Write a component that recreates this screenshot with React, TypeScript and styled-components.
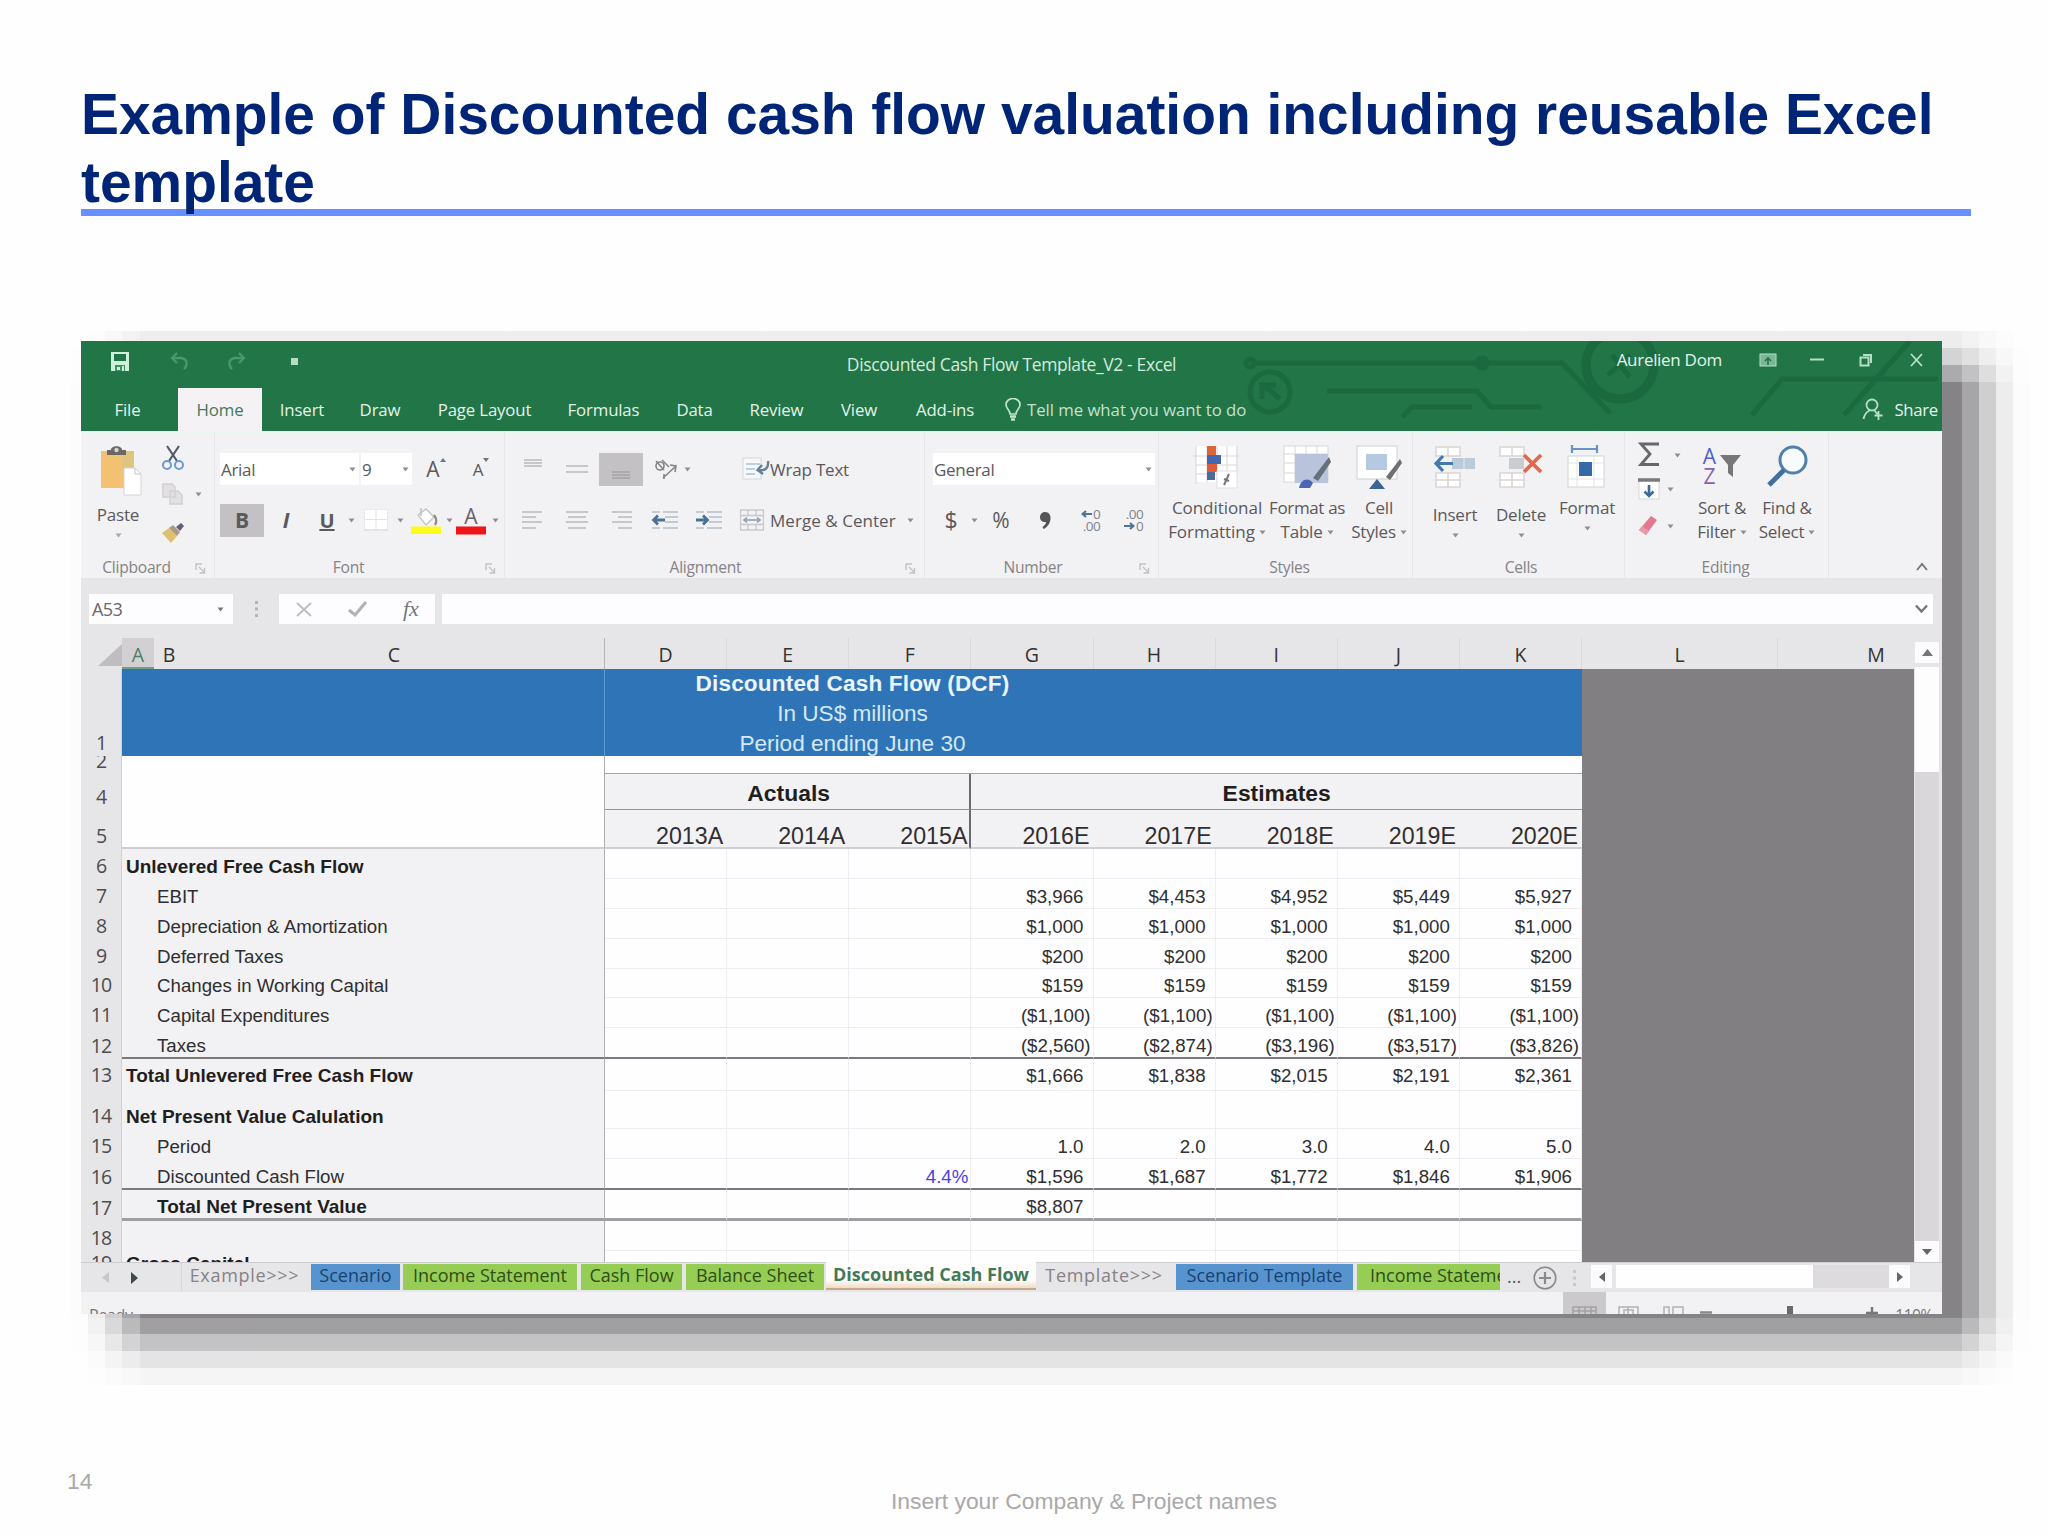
import React from 'react';
import styled, { createGlobalStyle, css } from 'styled-components';

const UI = '"Open Sans", "Noto Sans", sans-serif';
const ARIAL = '"Liberation Sans", Arial, sans-serif';
const GRID = '41px 483px repeat(8, 122.125px) 1fr';

const Global = createGlobalStyle`
  * { box-sizing: border-box; }
  html, body { margin: 0; padding: 0; background: #fff; }
  svg { display: block; flex: none; }
`;

/* ---------- slide ---------- */
const Slide = styled.div`
  width: 2048px; height: 1536px; background: #fefefe; overflow: hidden;
  padding: 79px 106px 0 81px; font-family: ${ARIAL};
  display: flex; flex-direction: column;
`;
const Heading = styled.h1`
  margin: 0; width: 1890px; height: 137px; padding-top: 1px;
  border-bottom: 7px solid #6690ff;
  font-size: 56.9px; line-height: 68.4px; font-weight: 700; color: #002577;
`;
const Stage = styled.div`
  position: relative; margin-top: 125px; width: 1861px; height: 973px;
`;
const Shadow = styled.div`
  position: absolute; left: -10px; top: -10px; width: 1959px; height: 1054px;
  background: linear-gradient(to bottom,
    rgba(12,8,14,.066) 0 17px, rgba(12,8,14,.17) 17px 34px, rgba(12,8,14,.34) 34px 51px,
    rgba(12,8,14,.5) 51px 987px, rgba(12,8,14,.39) 987px 1003px, rgba(12,8,14,.24) 1003px 1020px,
    rgba(12,8,14,.105) 1020px 1037px, rgba(12,8,14,.035) 1037px 1054px);
  mask-image: linear-gradient(to right,
    rgba(0,0,0,.01) 0 17px, rgba(0,0,0,.12) 17px 34px, rgba(0,0,0,.38) 34px 51px, rgba(0,0,0,.72) 51px 69px,
    #000 69px 1891px, rgba(0,0,0,.72) 1891px 1908px, rgba(0,0,0,.38) 1908px 1925px,
    rgba(0,0,0,.14) 1925px 1942px, rgba(0,0,0,.01) 1942px 1959px);
`;
const Window = styled.div`
  position: relative; width: 1861px; height: 973px; overflow: hidden;
  background: #e6e5e7; font-family: ${UI}; display: flex; flex-direction: column;
`;
const Footer = styled.footer`
  flex: 1; display: grid; grid-template-columns: 810px auto 1fr;
  color: #aaa8aa; font-size: 22.85px; line-height: 28px; padding-top: 153px;
`;
const PageNo = styled.span`margin-left: -14px;`;
const Company = styled.span`padding-top: 20px; white-space: nowrap;`;

/* ---------- title bar & tabs ---------- */
const Green = styled.header`
  position: relative; height: 90px; flex: none; background: #217547; color: #e4f3ea;
`;
const Circuit = styled.svg`position: absolute; right: 0; top: 0;`;
const TitleRow = styled.div`
  position: relative; height: 47px; display: grid; grid-template-columns: 1fr auto 1fr;
`;
const Quick = styled.div`display: flex; align-items: center; padding: 0 0 7px 29px;`;
const Gap = styled.span<{ $w: number }>`flex: none; width: ${p => p.$w}px;`;
const DocTitle = styled.div`
  font-size: 17.5px; line-height: 47px; white-space: pre; letter-spacing: -0.38px; color: #d3ebdc;
`;
const WinTools = styled.div`
  display: flex; align-items: center; justify-content: flex-end; padding: 0 19px 10px 0;
`;
const UserName = styled.span`font-size: 17px; letter-spacing: -0.3px; white-space: nowrap; margin-right: 37px;`;
const TabRow = styled.nav`position: relative; height: 43px; display: flex;`;
const Tab = styled.div<{ $w: number; $on?: boolean; $pull?: number }>`
  width: ${p => p.$w}px; padding-right: ${p => p.$pull ?? 0}px; text-align: center; line-height: 44px; font-size: 16.8px;
  letter-spacing: -0.15px; white-space: nowrap;
  ${p => p.$on && css`background: #f4f2f4; color: #46785c;`}
`;
const Tell = styled.div`
  display: flex; align-items: center; gap: 6px; padding-left: 13px; flex: 1;
  font-size: 16.8px; letter-spacing: -0.05px; color: #c4e2cf; white-space: nowrap;
`;
const Share = styled.div`
  display: flex; align-items: center; gap: 10px; padding-right: 4px; font-size: 16.8px; letter-spacing: -0.3px;
`;

/* ---------- ribbon ---------- */
const Ribbon = styled.div`
  height: 147px; flex: none; display: flex; background: #f2f1f3; color: #5a595c;
  border-top: 2px solid #eaf7ef;
`;
const Group = styled.section<{ $w: number }>`
  width: ${p => p.$w}px; flex: none; display: flex; flex-direction: column; border-right: 1px solid #e8e6e9;
`;
const GroupBody = styled.div`height: 123px; display: flex; padding-top: 12px;`;
const GroupFoot = styled.div<{ $pad?: number; $lead?: number }>`
  height: 22px; display: flex; align-items: center; justify-content: center; position: relative;
  font-size: 15.6px; color: #858386; padding-right: ${p => p.$pad ?? 0}px; padding-left: ${p => p.$lead ?? 0}px;
  letter-spacing: -0.25px;
`;
const Launcher = styled.svg`position: absolute; right: 7px; top: 6px;`;
const Rows = styled.div`display: flex; flex-direction: column; gap: 3px;`;
const Row = styled.div`height: 48px; display: flex; align-items: center;`;
const Slot = styled.div<{ $w: number; $ml?: number; $fs?: number; $b?: boolean; $on?: boolean; $i?: boolean }>`
  width: ${p => p.$w}px; margin-left: ${p => p.$ml ?? 0}px; height: 33px; flex: none;
  display: flex; align-items: center; justify-content: center; white-space: nowrap;
  font-size: ${p => p.$fs ?? 17}px; font-weight: ${p => (p.$b ? 700 : 400)};
  font-style: ${p => (p.$i ? 'italic' : 'normal')};
  background: ${p => (p.$on ? '#c3c1c4' : 'transparent')};
`;
const Combo = styled.div<{ $w: number; $ml?: number }>`
  width: ${p => p.$w}px; margin-left: ${p => p.$ml ?? 0}px; height: 32px; background: #fff; flex: none;
  display: flex; align-items: center; justify-content: space-between; padding: 0 3px 0 1px;
  font-size: 17px; letter-spacing: -0.3px;
`;
const RowLabel = styled.span<{ $w: number; $ls?: number }>`
  width: ${p => p.$w}px; font-size: 17px; letter-spacing: ${p => p.$ls ?? -0.2}px; white-space: nowrap;
`;
const Tall = styled.div<{ $w: number; $ml?: number }>`
  width: ${p => p.$w}px; margin-left: ${p => p.$ml ?? 0}px; flex: none;
  display: flex; flex-direction: column; align-items: center;
`;
const TallIcon = styled.div<{ $h: number }>`height: ${p => p.$h}px; flex: none; display: flex; align-items: flex-start;`;
const TallText = styled.div<{ $ls?: number }>`
  height: 24px; line-height: 24px; font-size: 17px; white-space: nowrap; letter-spacing: ${p => p.$ls ?? -0.2}px;
  display: flex; align-items: center; gap: 4px;
`;
const Drop = styled.div`padding-top: 6px;`;
const Stack = styled.div<{ $w: number; $ml?: number }>`
  width: ${p => p.$w}px; margin-left: ${p => p.$ml ?? 0}px; display: flex; flex-direction: column;
`;
const StackRow = styled.div<{ $h: number; $gap?: number }>`
  height: ${p => p.$h}px; display: flex; align-items: center; gap: ${p => p.$gap ?? 12}px;
`;
const Collapse = styled.div`flex: 1; display: flex; align-items: flex-end; justify-content: flex-end; padding: 0 14px 7px 0;`;

/* ---------- formula bar ---------- */
const FormulaBar = styled.div`height: 60px; flex: none; display: flex; padding: 16px 9px 0 8px;`;
const White = styled.div<{ $w?: number; $ml?: number }>`
  height: 30px; background: #fdfcfe; ${p => (p.$w ? `width: ${p.$w}px` : 'flex: 1')};
  margin-left: ${p => p.$ml ?? 0}px; display: flex; align-items: center; justify-content: space-between;
  padding: 0 5px 0 3px; font-size: 18px; letter-spacing: -0.6px; color: #6a686b;
`;
const NameArrow = styled.span`padding-right: 4px;`;
const Dots = styled.div`width: 46px; height: 30px; display: flex; align-items: center; justify-content: center;`;
const Buttons = styled.div`
  width: 156px; height: 30px; background: #fdfcfe; display: flex; align-items: center; padding-left: 17px; color: #77757a;
`;
const Fx = styled.span`font-family: "Liberation Serif", serif; font-style: italic; font-size: 22px; line-height: 28px; margin-left: 36px;`;

/* ---------- sheet ---------- */
const SheetArea = styled.div`height: 624px; flex: none; display: flex; overflow: hidden;`;
const Sheet = styled.div`width: 1833px; height: 624px; overflow: hidden; flex: none;`;
const HeadRow = styled.div`
  height: 31px; display: grid; grid-template-columns: ${GRID}; grid-auto-rows: 100%; background: #e6e5e7; color: #333234;
  font-size: 19.5px; line-height: 34px; text-align: center;
`;
const HeadCell = styled.div`border-right: 1px solid #dbd9dc;`;
const HeadABC = styled.div`display: grid; grid-template-columns: 32px 30px 1fr; border-right: 1px solid #b5b3b6;`;
const HeadA = styled.div`background: #d2d0d3; color: #4d7f5f; border-bottom: 2px solid #6fa283; height: 31px;`;
const HeadLM = styled.div`display: grid; grid-template-columns: 196px 1fr;`;
const HeadL = styled.div`border-right: 1px solid #d9d7da;`;
const HeadM = styled.div`padding-left: 60px;`;
const Corner = styled.div`display: flex; justify-content: flex-end; align-items: flex-end; padding: 0 0 3px;`;
const Line = styled.div<{ $h: number }>`
  height: ${p => p.$h}px; display: grid; grid-template-columns: ${GRID}; grid-auto-rows: 100%;
`;
const Num = styled.div<{ $lift?: number }>`
  display: flex; align-items: flex-end; justify-content: center; background: #e6e5e7; color: #4e4c4f;
  border-right: 1px solid #d2d0d3; font-size: 19.5px; line-height: 22px; letter-spacing: -0.9px; overflow: hidden;
  padding-bottom: ${p => 2 + (p.$lift ?? 0)}px;
`;
const Label = styled.div<{ $b?: boolean; $ind?: boolean; $bot?: string; $white?: boolean; $lift?: number }>`
  display: flex; align-items: flex-end; background: ${p => (p.$white ? '#fefefe' : '#f2f1f3')};
  padding: 0 0 ${p => 2 + (p.$lift ?? 0)}px ${p => (p.$ind ? 35 : 4)}px; border-right: 1px solid #b0aeb1;
  border-bottom: ${p => p.$bot ?? '0 solid'}; font-family: ${ARIAL}; font-size: ${p => (p.$b ? 19 : 18.7)}px; line-height: 21px;
  font-weight: ${p => (p.$b ? 700 : 400)}; color: ${p => (p.$b ? '#1f1e20' : '#2f2e30')}; white-space: nowrap;
`;
const Cell = styled.div<{ $bot?: string; $blue?: boolean; $pad: number; $lift?: number }>`
  display: flex; align-items: flex-end; justify-content: flex-end; background: #fefdff;
  padding: 0 ${p => p.$pad}px ${p => (p.$bot ? 2 : 1) + (p.$lift ?? 0)}px 0; border-right: 1px solid #eeedef;
  border-bottom: ${p => p.$bot ?? '1px solid #eeedef'}; font-family: ${ARIAL}; font-size: 18.7px; line-height: 21px;
  color: ${p => (p.$blue ? '#4a3fe0' : '#2f2e30')}; white-space: nowrap;
`;
const Void = styled.div`background: #817f82;`;
const Banner = styled.div`
  grid-column: 3 / 11; background: #2f74b6; padding-right: 482px; text-align: center;
  font-family: ${ARIAL}; font-size: 22.6px; line-height: 29.8px; color: #d4e8f8; overflow: hidden;
`;
const BannerTitle = styled.div`font-weight: 700; color: #eaf5ff; letter-spacing: 0.15px;`;
const BannerLeft = styled.div`background: #2f74b6; border-right: 1px solid #5b9bd0;`;
const Blank = styled.div`grid-column: 3 / 11; background: #fefefe; border-bottom: 1px solid #a3a69c;`;
const Span = styled.div<{ $c: string; $line?: boolean }>`
  grid-column: ${p => p.$c}; background: #f2f1f3; border-bottom: 1px solid #969497;
  ${p => p.$line && css`border-right: 2px solid #6b696c; padding-left: 3px;`}
  text-align: center; font-family: ${ARIAL}; font-weight: 700; font-size: 22.9px; line-height: 38px; color: #1f1e20;
`;
const Year = styled.div<{ $line?: boolean }>`
  background: #f2f1f3; border-bottom: 2px solid #d0ced1; padding: 0 4px 0 0;
  ${p => p.$line && css`border-right: 2px solid #6b696c; padding-right: 2px;`}
  display: flex; justify-content: flex-end; align-items: flex-end;
  font-family: ${ARIAL}; font-size: 23.2px; line-height: 22px; color: #2f2e30;
`;
const VScroll = styled.div`
  width: 28px; display: flex; flex-direction: column; background: #e6e5e7; padding: 4px 3px 0 1px;
`;
const VBtn = styled.div`height: 21px; background: #fbfafc; display: flex; align-items: center; justify-content: center; flex: none;`;
const VThumb = styled.div`height: 105px; margin-top: 4px; background: #fdfdfe; flex: none;`;
const VTrack = styled.div`flex: 1; background: #d9d7da;`;

/* ---------- sheet tabs & status ---------- */
const TabBar = styled.div`
  height: 30px; flex: none; display: flex; background: #e6e5e7; border-top: 1px solid #cfcdd0; align-items: stretch;
`;
const tones: Record<string, string> = { blue: '#5794cf', green: '#95cd55', plain: 'transparent', on: '#fefdfb' };
const inks: Record<string, string> = { blue: '#1b426b', green: '#304d18', plain: '#858386', on: '#3f7a5a' };
const SheetTab = styled.div<{ $w: number; $ml?: number; $tone: string; $left?: boolean; $ls?: number }>`
  width: ${p => p.$w}px; margin: 1px 0 2px ${p => p.$ml ?? 0}px; flex: none; background: ${p => tones[p.$tone]};
  color: ${p => inks[p.$tone]}; font-size: 18px; line-height: 22px; white-space: nowrap; overflow: hidden;
  text-align: ${p => (p.$left ? 'left' : 'center')}; padding-left: ${p => (p.$left ? 13 : 0)}px;
  letter-spacing: ${p => p.$ls ?? 0}px;
  ${p => p.$tone === 'on' && css`font-weight: 700; border-bottom: 2px solid #c9a78b;
    background: linear-gradient(#fefdfb 70%, #f0dcc4); margin-top: -1px; line-height: 25px;`}
`;
const TabNav = styled.div`width: 101px; display: flex; align-items: center; gap: 22px; padding-left: 21px; border-right: 1px solid #d8d6d9;`;
const More = styled.span`width: 33px; padding-left: 7px; font-size: 18px; line-height: 27px; color: #555;`;
const HScroll = styled.div`
  margin-left: 15px; width: 319px; display: flex; padding: 2px 0 4px; background: #e6e5e7;
`;
const HBtn = styled.div`width: 21px; background: #fbfafc; display: flex; align-items: center; justify-content: center; flex: none;`;
const HThumb = styled.div`width: 197px; margin-left: 4px; background: #fefefe;`;
const HTrack = styled.div`flex: 1; background: #dddbde;`;
const Center = styled.div`display: flex; align-items: center;`;
const Status = styled.div`
  height: 22px; flex: none; display: flex; background: #f2f1f3; color: #77757a; font-size: 16px; overflow: hidden;
`;
const Ready = styled.span`padding: 12px 0 0 8px; line-height: 22px; flex: 1; letter-spacing: -0.4px;`;
const ViewBtn = styled.div<{ $on?: boolean; $w: number }>`
  width: ${p => p.$w}px; height: 22px; background: ${p => (p.$on ? '#cbc9cc' : 'transparent')};
  display: flex; justify-content: center; padding-top: 14px;
`;
const Zoom = styled.span`padding: 12px 9px 0 0; line-height: 22px; font-size: 15.5px; letter-spacing: -0.4px;`;

/* ---------- icons ---------- */
const Arrow = ({ c = '#908e91' }: { c?: string }) => (
  <svg width="7" height="5" viewBox="0 0 7 5"><path d="M.5 .5h6L3.5 4.5z" fill={c} /></svg>
);
const Launch = () => (
  <Launcher width="13" height="13" viewBox="0 0 13 13" fill="none" stroke="#c3c1c4" strokeWidth="1.4">
    <path d="M2 8V2h6M5 5l5 5M10.500 6v5h-5" />
  </Launcher>
);
const Save = () => (
  <svg width="20" height="21" viewBox="0 0 20 21"><path d="M1 1h18v19H1z" fill="#cdf0da" /><path d="M4 3h12v7H4z" fill="#217547" /><path d="M5 14h10v6H5z" fill="#3f8f62" /><path d="M7 16h3v3H7zM12 15h2v5h-2z" fill="#cdf0da" /></svg>
);
const Undo = ({ flip }: { flip?: boolean }) => (
  <svg width="19" height="18" viewBox="0 0 19 18" fill="none" stroke="#4a976d" strokeWidth="2.400">
    <g transform={flip ? 'translate(19 0) scale(-1 1)' : undefined}><path d="M2 6h8c8 0 8 7 4 11M7 1L2 6l5 5" /></g>
  </svg>
);
const Bulb = () => (
  <svg width="16" height="23" viewBox="0 0 16 23" fill="none" stroke="#bfe5cd" strokeWidth="1.700">
    <path d="M5 16c0-4-4-5-4-9.500a7 6 0 0 1 14 0C15 11 11 12 11 16z" /><path d="M5 18.500h6M6 21.500h4" strokeWidth="2.500" />
  </svg>
);
const Person = () => (
  <svg width="22" height="23" viewBox="0 0 22 23" fill="none" stroke="#b9dfc7" strokeWidth="1.800">
    <circle cx="10" cy="7" r="5.500" /><path d="M1.500 21c1-5 4-7.500 6-8.500M12.500 12.500l4 5M16.500 13v9M12.500 17.500h8" />
  </svg>
);
const PasteIcon = () => (
  <svg width="42" height="54" viewBox="0 0 42 54">
    <rect x="1" y="6" width="33" height="37" fill="#f4c173" /><rect x="22" y="6" width="12" height="20" fill="#dfc47f" />
    <path d="M7 10V5h4c0-5 11-5 11 0h4v5z" fill="#6b6667" /><circle cx="16.500" cy="5" r="2.200" fill="#d9d3c8" />
    <path d="M24 23h11l6 6v21H24z" fill="#fff" stroke="#d4d2d8" /><path d="M35 23v6h6" fill="none" stroke="#c5c3cf" />
  </svg>
);
const Cut = () => (
  <svg width="24" height="26" viewBox="0 0 24 26" fill="none">
    <path d="M6 1l10 15M18 1L8 16" stroke="#555b66" strokeWidth="2.200" />
    <circle cx="6" cy="20" r="4" stroke="#6d9bcf" strokeWidth="2" /><circle cx="18" cy="20" r="4" stroke="#6d9bcf" strokeWidth="2" />
  </svg>
);
const Copy = () => (
  <svg width="24" height="24" viewBox="0 0 24 24" fill="#e2e0e3" stroke="#d2d0d3" strokeWidth="1.500"><path d="M2 2h9l3 3v10H2zM9 9h8l4 4v9H9z" /></svg>
);
const Brush = () => (
  <svg width="24" height="22" viewBox="0 0 24 22"><path d="M1 11l7-5 8 8-6 7z" fill="#dfc06e" /><path d="M8 6l4-3 7 7-3 4z" fill="#a89a86" /><path d="M15 5l5-4 3 3-4 5z" fill="#665c78" /></svg>
);
const Border = () => (
  <svg width="24" height="22" viewBox="0 0 24 22"><rect x=".5" y=".5" width="23" height="20" fill="#fff" stroke="#ebe9ec" /><path d="M12 1v20M1 10.500h22" stroke="#e4e2e5" /><path d="M0 21h24" stroke="#dad8db" /></svg>
);
const Bucket = () => (
  <svg width="32" height="30" viewBox="0 0 32 30"><path d="M8 10l8-6 8 8-8 8z" fill="#fdfdfd" stroke="#c8c6c4" strokeWidth="1.500" /><path d="M11 3v8" stroke="#c0bebc" strokeWidth="1.500" /><path d="M24 10c3 4 3 7 1 10" stroke="#8e8c85" strokeWidth="2.200" fill="none" /><rect x="1" y="21.500" width="30" height="7.500" fill="#fbfb1c" /></svg>
);
const FontColorBar = () => (
  <svg width="30" height="9" viewBox="0 0 30 9"><rect width="30" height="8" y=".5" fill="#f01318" /></svg>
);
const FontColor = styled.div<{ $w: number }>`
  width: ${p => p.$w}px; height: 28px; display: flex; flex-direction: column; align-items: center;
  font-size: 21px; line-height: 20px; color: #66646a; flex: none;
`;
const Grow = ({ d }: { d: string }) => (
  <svg width="6" height="24" viewBox="0 0 6 24"><path d={d} fill="#6b7685" /></svg>
);
const Bars = ({ w, ys, x = [0, 0, 0, 0], c = '#c3c1c4' }: { w: number[]; ys: number[]; x?: number[]; c?: string }) => (
  <svg width="22" height="22" viewBox="0 0 22 22" stroke={c} strokeWidth="1.800">
    {ys.map((y, i) => <path key={y} d={`M${x[i]} ${y}h${w[i]}`} />)}
  </svg>
);
const Angle = () => (
  <svg width="26" height="24" viewBox="0 0 26 24" fill="none" stroke="#858386" strokeWidth="1.600"><circle cx="7" cy="9" r="4" /><path d="M3 4l8 9M9 3l7 7M10 21L23 9M17 8l6 1-1 6M11 22l0-5" /></svg>
);
const Indent = ({ right }: { right?: boolean }) => (
  <svg width="28" height="22" viewBox="0 0 28 22" fill="none"><path d="M12 3h15M14 8h13M14 13h13M12 19h15M1 3h8M1 19h8" stroke="#c3ccd4" strokeWidth="1.800" />
    <path d={right ? 'M1 11h11M8 6.500l4.500 4.500L8 15.500' : 'M14 11H3M7 6.500L2.500 11 7 15.500'} stroke="#4a7296" strokeWidth="2.800" /></svg>
);
const Wrap = () => (
  <svg width="28" height="24" viewBox="0 0 28 24" fill="none"><rect x="1" y="1" width="18" height="21" fill="#f7f8fa" stroke="#d3d8de" /><path d="M4 7h14M4 12h9M4 17h9" stroke="#a5c2dc" strokeWidth="1.600" /><path d="M26 4c1 7-3 10-9 9M20 8l-4.500 5 5.500 4" stroke="#64809a" strokeWidth="2.400" /></svg>
);
const Merge = () => (
  <svg width="24" height="22" viewBox="0 0 24 22" fill="none" stroke="#c6c9cd"><path d="M.5 1h23v20H.5zM.5 6.500h23M.5 15.500h23M8 1v5M16 1v5M8 16v5M16 16v5" strokeWidth="1.400" /><path d="M4 11h16M7 8.500L4 11l3 2.500M17 8.500l3 2.500-3 2.500" stroke="#8b9eb3" strokeWidth="1.600" /></svg>
);
const DecBox = styled.div<{ $ml: number }>`
  width: 23px; margin-left: ${p => p.$ml}px; flex: none; display: flex; flex-direction: column;
  font-size: 13.5px; line-height: 12px; color: #7c858e; letter-spacing: -0.6px;
`;
const DecRow = styled.div`display: flex; align-items: center; justify-content: flex-end; gap: 1px; height: 12px;`;
const DecArrow = ({ right }: { right?: boolean }) => (
  <svg width="11" height="8" viewBox="0 0 11 8" fill="none" stroke="#4d7396" strokeWidth="2"><path d={right ? 'M0 4h9M6 1l3.500 3L6 7' : 'M11 4H2M5 1L1.500 4 5 7'} /></svg>
);
const Cond = () => (
  <svg width="48" height="46" viewBox="0 0 48 46"><rect x="3" y="1" width="40" height="36" fill="#fff" /><path d="M3 1v38M14 1v36M24 1v36M34 1v30M44 1v30M0 11h46M3 20h41M3 29h30" stroke="#dad6d8" /><rect x="14" y="1" width="9" height="9" fill="#d9673b" /><rect x="14" y="10" width="14" height="9" fill="#4467ad" /><rect x="14" y="19" width="10" height="8" fill="#dd5e36" /><rect x="14" y="27" width="8" height="8" fill="#51699b" /><rect x="24" y="26" width="20" height="17" fill="#fff" stroke="#e0dfe2" /><path d="M36 29l-5 11M31 34l5 2" stroke="#77757a" strokeWidth="2" /></svg>
);
const FmtTable = () => (
  <svg width="48" height="46" viewBox="0 0 48 46"><rect x="1" y="1" width="44" height="36" fill="#fff" stroke="#d8d8da" /><path d="M1 9h44M12 1v36M23 1v8M34 1v8M1 18h11M1 28h11" stroke="#d5d9d6" /><rect x="12" y="9" width="33" height="29" fill="#b9c4dc" /><path d="M46 12L30 33l5 3 13-19z" fill="#65707a" /><path d="M16 43c2-9 9-11 14-5l-3 5z" fill="#4c63b6" /></svg>
);
const CellStyles = () => (
  <svg width="46" height="46" viewBox="0 0 46 46"><rect x="1" y="1" width="40" height="33" fill="#fff" stroke="#c9d3cf" /><rect x="10" y="9" width="21" height="16" fill="#b6c9e2" /><path d="M44 14L30 32l4 3 12-17z" fill="#6e6f70" /><path d="M13 44l8-10 8 10z" fill="#3c6598" /></svg>
);
const InsertIcon = () => (
  <svg width="44" height="46" viewBox="0 0 44 46"><path d="M3 2h24v9H3zM15 2v9M3 28h24v14H3zM15 28v14M3 35h24" fill="#fff" stroke="#d9d5d3" strokeWidth="1.500" /><rect x="19" y="13" width="23" height="11" fill="#bccbdc" /><path d="M31 13v11" stroke="#e3e9f0" /><path d="M20 18.500H3M10 11l-7 7.500 7 7.500" fill="none" stroke="#4179b0" strokeWidth="3.200" /></svg>
);
const DeleteIcon = () => (
  <svg width="44" height="46" viewBox="0 0 44 46"><path d="M1 2h24v9H1zM13 2v9M1 28h24v14H1zM13 28v14M1 35h24" fill="#fff" stroke="#d9d5d3" strokeWidth="1.500" /><rect x="10" y="13" width="15" height="11" fill="#c9cdd3" /><path d="M25 10l17 17M42 10L25 27" stroke="#e2694d" strokeWidth="3.800" /></svg>
);
const FormatIcon = () => (
  <svg width="42" height="48" viewBox="0 0 42 48"><path d="M6 4h25M6 0v8M31 0v8" stroke="#6b94c4" strokeWidth="2.200" fill="none" /><rect x="2" y="11" width="36" height="31" fill="#fff" stroke="#ccd6d0" /><path d="M2 18h38M2 34h38M11 11v31M28 11v31" stroke="#e1e3e4" /><rect x="13" y="17" width="13" height="14" fill="#356aa6" /></svg>
);
const FillIcon = () => (
  <svg width="23" height="22" viewBox="0 0 23 22"><rect x="1" y="1" width="20" height="20" fill="#fff" stroke="#d8d6d9" /><path d="M0 2h22" stroke="#7a787b" strokeWidth="3.500" /><path d="M11 7v11M6.500 13.500L11 18l4.500-4.500" stroke="#3d6a98" strokeWidth="2.600" fill="none" /></svg>
);
const Eraser = () => (
  <svg width="22" height="20" viewBox="0 0 22 20"><path d="M1 14L13 0l6 4L8 19z" fill="#e0798f" /><path d="M1 14l3-4 7 5-3 4z" fill="#e89aaa" /></svg>
);
const Sigma = () => (
  <svg width="24" height="26" viewBox="0 0 24 26" fill="none" stroke="#68666a" strokeWidth="2.800"><path d="M21 2H3l9 10L3 22.500h18" /></svg>
);
const SortWrap = styled.div`display: flex; align-items: center; gap: 4px; padding-top: 1px;`;
const SortAZ = styled.div`font-size: 21px; line-height: 20px; color: #4d62c4; text-align: center;`;
const SortZ = styled.div`color: #8d62ad;`;
const Funnel = () => <svg width="21" height="24" viewBox="0 0 21 24"><path d="M0 1h21l-8 10v12l-5-4v-8z" fill="#777578" /></svg>;
const Find = () => (
  <svg width="41" height="44" viewBox="0 0 41 44" fill="none"><circle cx="26" cy="15" r="13" fill="#f7fbfe" stroke="#4f80ad" strokeWidth="3" /><path d="M17 25L2 40" stroke="#426f9b" strokeWidth="5" /></svg>
);

/* ---------- data ---------- */
type R = { n: string; h: number; t?: string; b?: boolean; ind?: boolean; bot?: string; v?: string[]; lift?: number };
const rows: R[] = [
  { n: '6', h: 30, t: 'Unlevered Free Cash Flow', b: true },
  { n: '7', h: 30, t: 'EBIT', ind: true, v: ['', '', '', '$3,966', '$4,453', '$4,952', '$5,449', '$5,927'] },
  { n: '8', h: 30, t: 'Depreciation & Amortization', ind: true, v: ['', '', '', '$1,000', '$1,000', '$1,000', '$1,000', '$1,000'] },
  { n: '9', h: 30, t: 'Deferred Taxes', ind: true, v: ['', '', '', '$200', '$200', '$200', '$200', '$200'] },
  { n: '10', h: 29, t: 'Changes in Working Capital', ind: true, v: ['', '', '', '$159', '$159', '$159', '$159', '$159'] },
  { n: '11', h: 30, t: 'Capital Expenditures', ind: true, v: ['', '', '', '($1,100)', '($1,100)', '($1,100)', '($1,100)', '($1,100)'] },
  { n: '12', h: 31, t: 'Taxes', ind: true, bot: '2px solid #7b797c', v: ['', '', '', '($2,560)', '($2,874)', '($3,196)', '($3,517)', '($3,826)'] },
  { n: '13', h: 32, t: 'Total Unlevered Free Cash Flow', b: true, lift: 3, v: ['', '', '', '$1,666', '$1,838', '$2,015', '$2,191', '$2,361'] },
  { n: '14', h: 38, t: 'Net Present Value Calulation', b: true },
  { n: '15', h: 30, t: 'Period', ind: true, v: ['', '', '', '1.0', '2.0', '3.0', '4.0', '5.0'] },
  { n: '16', h: 31, t: 'Discounted Cash Flow', ind: true, bot: '2px solid #7b797c', v: ['', '', '4.4%', '$1,596', '$1,687', '$1,772', '$1,846', '$1,906'] },
  { n: '17', h: 31, t: 'Total Net Present Value', b: true, ind: true, bot: '3px solid #a09ea1', v: ['', '', '', '$8,807', '', '', '', ''] },
  { n: '18', h: 30 },
  { n: '19', h: 30, t: 'Gross Capital', b: true, lift: 5 },
];
const empty = ['', '', '', '', '', '', '', ''];
const years = ['2013A', '2014A', '2015A', '2016E', '2017E', '2018E', '2019E', '2020E'];
const tabs: [string, number][] = [['Insert', 80], ['Draw', 76], ['Page Layout', 133], ['Formulas', 105], ['Data', 77], ['Review', 87], ['View', 78], ['Add-ins', 94]];

export default function App() {
  return (
    <>
      <Global />
      <Slide>
        <Heading>Example of Discounted cash flow valuation including reusable Excel template</Heading>
        <Stage>
          <Shadow />
          <Window>
            <Green>
              <Circuit width="720" height="90" viewBox="0 0 720 90" fill="none" stroke="#1b693e" strokeWidth="5">
                <path d="M30 22h288l22 0 48 50M105 50h150l14 16h50M180 76l10-10h60" />
                <circle cx="48" cy="51" r="20" /><path d="M40 58V44h14M44 46l14 12" />
                <circle cx="398" cy="24" r="34" strokeWidth="9" /><path d="M386 34l22-20M390 14l18 22" />
                <circle cx="260" cy="22" r="5" /><circle cx="28" cy="22" r="4" />
                <path d="M530 74l30-36h156M622 74L688 0" />
              </Circuit>
              <TitleRow>
                <Quick><Save /><Gap $w={40} /><Undo /><Gap $w={38} /><Undo flip /><Gap $w={45} />
                  <svg width="7" height="7" viewBox="0 0 7 7"><path d="M0 0h7v7H0z" fill="#b5dfc5" /></svg>
                </Quick>
                <DocTitle>{'Discounted Cash Flow Template_V2 - Excel'}</DocTitle>
                <WinTools>
                  <UserName>Aurelien Dom</UserName>
                  <svg width="19" height="14" viewBox="0 0 19 14"><rect x="1" y="1" width="16" height="12" fill="#7ab796" stroke="#b5dfc5" /><path d="M9 12V5M6 8l3-3 3 3" stroke="#217547" strokeWidth="1.600" fill="none" /></svg>
                  <Gap $w={32} />
                  <svg width="14" height="3" viewBox="0 0 14 3"><path d="M0 1.500h14" stroke="#b5dfc5" strokeWidth="2" /></svg>
                  <Gap $w={35} />
                  <svg width="14" height="14" viewBox="0 0 14 14" fill="none" stroke="#b5dfc5" strokeWidth="2"><path d="M1.500 4.500h8v8h-8zM4 2h8v8" /></svg>
                  <Gap $w={37} />
                  <svg width="13" height="14" viewBox="0 0 13 14" fill="none" stroke="#c0e4ce" strokeWidth="1.700"><path d="M1 1l11 12M12 1L1 13" /></svg>
                </WinTools>
              </TitleRow>
              <TabRow>
                <Tab $w={97} $pull={4}>File</Tab>
                <Tab $w={84} $on>Home</Tab>
                {tabs.map(([t, w]) => <Tab key={t} $w={w}>{t}</Tab>)}
                <Tell><Bulb /><span>Tell me what you want to do</span></Tell>
                <Share><Person /><span>Share</span></Share>
              </TabRow>
            </Green>

            <Ribbon>
              <Group $w={134}>
                <GroupBody>
                  <Tall $w={56} $ml={9}>
                    <TallIcon $h={58}><Gap $w={6} /><PasteIcon /></TallIcon>
                    <TallText>Paste</TallText><Drop><Arrow c="#aaa8ab" /></Drop>
                  </Tall>
                  <Stack $w={60} $ml={15}>
                    <StackRow $h={26}><Cut /></StackRow>
                    <StackRow $h={46} $gap={10}><Copy /><Arrow /></StackRow>
                    <StackRow $h={32}><Brush /></StackRow>
                  </Stack>
                </GroupBody>
                <GroupFoot $pad={22}>Clipboard<Launch /></GroupFoot>
              </Group>
              <Group $w={290}>
                <GroupBody>
                  <Rows>
                    <Row>
                      <Combo $w={139} $ml={5}>Arial<Arrow /></Combo>
                      <Combo $w={51} $ml={2}>9<Arrow /></Combo>
                      <Slot $w={46} $fs={21} $ml={1}>A<Grow d="M0 5h6L3 1z" /></Slot>
                      <Slot $w={44} $fs={17}>A<Grow d="M0 1h6L3 5z" /></Slot>
                    </Row>
                    <Row>
                      <Slot $w={44} $ml={5} $fs={21} $b $on>B</Slot>
                      <Slot $w={44} $fs={21} $b $i>I</Slot>
                      <Slot $w={38} $fs={20} $b><u>U</u></Slot><Slot $w={10}><Arrow /></Slot>
                      <Slot $w={39}><Border /></Slot><Slot $w={10}><Arrow /></Slot>
                      <Slot $w={42}><Bucket /></Slot><Slot $w={4}><Arrow /></Slot>
                      <FontColor $w={40}>A<FontColorBar /></FontColor><Slot $w={8}><Arrow /></Slot>
                    </Row>
                  </Rows>
                </GroupBody>
                <GroupFoot $pad={22}>Font<Launch /></GroupFoot>
              </Group>
              <Group $w={420}>
                <GroupBody>
                  <Rows>
                    <Row>
                      <Slot $w={44} $ml={6}><Bars w={[18, 18, 18]} ys={[2, 5, 8]} x={[2, 2, 2]} /></Slot>
                      <Slot $w={44}><Bars w={[22, 22]} ys={[8, 14]} /></Slot>
                      <Slot $w={44} $on><Bars w={[18, 18, 18]} ys={[14, 17, 20]} x={[2, 2, 2]} c="#a9a7aa" /></Slot>
                      <Slot $w={38} $ml={4}><Angle /></Slot><Slot $w={4}><Arrow /></Slot>
                      <Slot $w={28} $ml={53}><Wrap /></Slot>
                      <RowLabel $w={90}>Wrap Text</RowLabel>
                    </Row>
                    <Row>
                      <Slot $w={44} $ml={6}><Bars w={[20, 14, 20, 14]} ys={[3, 8, 13, 19]} /></Slot>
                      <Slot $w={44}><Bars w={[22, 18, 22, 18]} ys={[3, 8, 13, 19]} x={[0, 2, 0, 2]} /></Slot>
                      <Slot $w={44}><Bars w={[20, 14, 20, 14]} ys={[3, 8, 13, 19]} x={[2, 8, 2, 8]} /></Slot>
                      <Slot $w={44}><Indent /></Slot><Slot $w={44}><Indent right /></Slot>
                      <Slot $w={24} $ml={9}><Merge /></Slot>
                      <Gap $w={6} /><RowLabel $w={137} $ls={0.05}>Merge &amp; Center</RowLabel><Arrow />
                    </Row>
                  </Rows>
                </GroupBody>
                <GroupFoot $pad={18}>Alignment<Launch /></GroupFoot>
              </Group>
              <Group $w={234}>
                <GroupBody>
                  <Rows>
                    <Row><Combo $w={222} $ml={8}>General<Arrow /></Combo></Row>
                    <Row>
                      <Slot $w={34} $ml={9} $fs={23}>$</Slot><Slot $w={12}><Arrow /></Slot>
                      <Slot $w={42} $fs={21}>%</Slot>
                      <Slot $w={46}><svg width="11" height="17" viewBox="0 0 11 17"><path d="M5 0c4 0 5.500 3 5.500 6 0 5-3 9-7 11l-1-2c2-1.500 3.500-3 3.500-5C2 10.500 0 8 0 5.300 0 2.500 2 0 5 0z" fill="#555356" /></svg></Slot>
                      <DecBox $ml={9}><DecRow><DecArrow />0</DecRow><DecRow>.00</DecRow></DecBox>
                      <DecBox $ml={20}><DecRow>.00</DecRow><DecRow><DecArrow right />0</DecRow></DecBox>
                    </Row>
                  </Rows>
                </GroupBody>
                <GroupFoot $pad={17}>Number<Launch /></GroupFoot>
              </Group>
              <Group $w={254}>
                <GroupBody>
                  <Tall $w={100} $ml={8}><TallIcon $h={51}><Cond /></TallIcon><TallText $ls={-0.05}>Conditional</TallText><TallText $ls={-0.05}>Formatting <Arrow /></TallText></Tall>
                  <Tall $w={80}><TallIcon $h={51}><FmtTable /></TallIcon><TallText $ls={-0.35}>Format as</TallText><TallText>Table <Arrow /></TallText></Tall>
                  <Tall $w={64}><TallIcon $h={51}><CellStyles /></TallIcon><TallText>Cell</TallText><TallText>Styles <Arrow /></TallText></Tall>
                </GroupBody>
                <GroupFoot $lead={8}>Styles</GroupFoot>
              </Group>
              <Group $w={212}>
                <GroupBody>
                  <Tall $w={66} $ml={9}><TallIcon $h={58}><InsertIcon /></TallIcon><TallText>Insert</TallText><Drop><Arrow /></Drop></Tall>
                  <Tall $w={66}><TallIcon $h={58}><DeleteIcon /></TallIcon><TallText>Delete</TallText><Drop><Arrow /></Drop></Tall>
                  <Tall $w={66}><TallIcon $h={51}><FormatIcon /></TallIcon><TallText>Format</TallText><Drop><Arrow /></Drop></Tall>
                </GroupBody>
                <GroupFoot $lead={5}>Cells</GroupFoot>
              </Group>
              <Group $w={204}>
                <GroupBody>
                  <Stack $w={58} $ml={13}>
                    <StackRow $h={20}><Sigma /><Arrow /></StackRow>
                    <StackRow $h={48} $gap={6}><FillIcon /><Arrow /></StackRow>
                    <StackRow $h={26} $gap={7}><Eraser /><Arrow /></StackRow>
                  </Stack>
                  <Tall $w={58} $ml={-3}><TallIcon $h={51}><SortWrap><SortAZ>A<SortZ>Z</SortZ></SortAZ><Funnel /></SortWrap></TallIcon><TallText>Sort &amp;</TallText><TallText>Filter <Arrow /></TallText></Tall>
                  <Tall $w={64} $ml={4}><TallIcon $h={51}><Find /></TallIcon><TallText>Find &amp;</TallText><TallText>Select <Arrow /></TallText></Tall>
                </GroupBody>
                <GroupFoot $pad={2}>Editing</GroupFoot>
              </Group>
              <Collapse><svg width="12" height="9" viewBox="0 0 12 9" fill="none" stroke="#77757a" strokeWidth="1.900"><path d="M1 8l5-6 5 6" /></svg></Collapse>
            </Ribbon>

            <FormulaBar>
              <White $w={144}>A53<NameArrow><Arrow c="#777" /></NameArrow></White>
              <Dots><svg width="3" height="18" viewBox="0 0 3 18" fill="#b5b3b6"><path d="M0 1h3v3H0zM0 7.500h3v3H0zM0 14h3v3H0z" /></svg></Dots>
              <Buttons>
                <svg width="16" height="15" viewBox="0 0 16 15" stroke="#c1bfc2" strokeWidth="2.200"><path d="M1 1l14 13M15 1L1 14" /></svg>
                <Gap $w={36} />
                <svg width="19" height="16" viewBox="0 0 19 16" fill="none" stroke="#b3b1b4" strokeWidth="3"><path d="M1 9l6 5L18 1" /></svg>
                <Fx>fx</Fx>
              </Buttons>
              <White $ml={7}><span /><svg width="13" height="10" viewBox="0 0 13 10" fill="none" stroke="#77757a" strokeWidth="2.400"><path d="M1 1.500l5.500 6 5.500-6" /></svg></White>
            </FormulaBar>

            <SheetArea>
              <Sheet>
                <HeadRow>
                  <Corner><svg width="24" height="22" viewBox="0 0 24 22"><path d="M24 0v22H0z" fill="#bfbdc0" /></svg></Corner>
                  <HeadABC><HeadA>A</HeadA><div>B</div><div>C</div></HeadABC>
                  {['D', 'E', 'F', 'G', 'H', 'I', 'J', 'K'].map(c => <HeadCell key={c}>{c}</HeadCell>)}
                  <HeadLM><HeadL>L</HeadL><HeadM>M</HeadM></HeadLM>
                </HeadRow>
                <Line $h={87}>
                  <Num>1</Num><BannerLeft />
                  <Banner><BannerTitle>Discounted Cash Flow (DCF)</BannerTitle><div>In US$ millions</div><div>Period ending June 30</div></Banner>
                  <Void />
                </Line>
                <Line $h={18}><Num>2</Num><Label $white /><Blank /><Void /></Line>
                <Line $h={36}><Num>4</Num><Label $white /><Span $c="3 / 6" $line>Actuals</Span><Span $c="6 / 11">Estimates</Span><Void /></Line>
                <Line $h={39}>
                  <Num>5</Num><Label $white $bot="2px solid #d0ced1" />
                  {years.map((y, i) => <Year key={y} $line={i === 2}>{y}</Year>)}<Void />
                </Line>
                {rows.map(r => (
                  <Line key={r.n} $h={r.h}>
                    <Num $lift={r.lift}>{r.n}</Num>
                    <Label $b={r.b} $ind={r.ind} $bot={r.bot} $lift={r.lift ?? (r.bot ? -1 : 0)}>{r.t}</Label>
                    {(r.v ?? empty).map((v, i) => (
                      <Cell key={i} $bot={r.bot} $lift={r.lift ?? (r.bot ? -1 : 0)} $blue={v.includes('%')} $pad={v.startsWith('(') ? 2 : v.includes('%') ? 2 : 9}>{v}</Cell>
                    ))}
                    <Void />
                  </Line>
                ))}
              </Sheet>
              <VScroll>
                <VBtn><svg width="11" height="7" viewBox="0 0 11 7"><path d="M0 7l5.500-7L11 7z" fill="#77757a" /></svg></VBtn>
                <VThumb /><VTrack />
                <VBtn><svg width="10" height="6" viewBox="0 0 10 6"><path d="M0 0h10L5 6z" fill="#666" /></svg></VBtn>
              </VScroll>
            </SheetArea>

            <TabBar>
              <TabNav>
                <svg width="7" height="11" viewBox="0 0 7 11"><path d="M7 0v11L0 5.500z" fill="#c9c7ca" /></svg>
                <svg width="7" height="12" viewBox="0 0 7 12"><path d="M0 0v12l7-6z" fill="#3f4a44" /></svg>
              </TabNav>
              <SheetTab $w={125} $tone="plain" $ls={0.7}>{'Example>>>'}</SheetTab>
              <SheetTab $w={89} $ml={4} $tone="blue">Scenario</SheetTab>
              <SheetTab $w={174} $ml={3} $tone="green">Income Statement</SheetTab>
              <SheetTab $w={101} $ml={4} $tone="green">Cash Flow</SheetTab>
              <SheetTab $w={138} $ml={4} $tone="green">Balance Sheet</SheetTab>
              <SheetTab $w={210} $ml={2} $tone="on">Discounted Cash Flow</SheetTab>
              <SheetTab $w={136} $tone="plain" $ls={0.7}>{'Template>>>'}</SheetTab>
              <SheetTab $w={177} $ml={4} $tone="blue">Scenario Template</SheetTab>
              <SheetTab $w={143} $ml={4} $tone="green" $left>Income Statement</SheetTab>
              <More>...</More>
              <Center><svg width="24" height="24" viewBox="0 0 24 24" fill="none" stroke="#8b898c" strokeWidth="1.600"><circle cx="12" cy="12" r="10.800" /><path d="M12 6v12M6 12h12" strokeWidth="2.200" /></svg></Center>
              <Gap $w={16} />
              <Center><svg width="3" height="16" viewBox="0 0 3 16" fill="#c9c7ca"><path d="M0 0h3v3H0zM0 6.500h3v3H0zM0 13h3v3H0z" /></svg></Center>
              <HScroll>
                <HBtn><svg width="6" height="10" viewBox="0 0 6 10"><path d="M6 0v10L0 5z" fill="#666" /></svg></HBtn>
                <HThumb /><HTrack />
                <HBtn><svg width="6" height="10" viewBox="0 0 6 10"><path d="M0 0v10l6-5z" fill="#666" /></svg></HBtn>
              </HScroll>
            </TabBar>
            <Status>
              <Ready>Ready</Ready>
              <ViewBtn $w={43} $on><svg width="25" height="8" viewBox="0 0 25 8" stroke="#a3a1a4" fill="none" strokeWidth="1.500"><path d="M1 8V1h23v7M1 5h23M7 1v7M13 1v7M19 1v7" /></svg></ViewBtn>
              <ViewBtn $w={45}><svg width="21" height="8" viewBox="0 0 21 8" stroke="#b3b1b4" fill="none" strokeWidth="1.500"><path d="M1 8V1h19v7M6 8V4h9v4M10 1v7" /></svg></ViewBtn>
              <ViewBtn $w={44}><svg width="21" height="8" viewBox="0 0 21 8" stroke="#b3b1b4" fill="none" strokeWidth="1.500"><path d="M1 8V1h5v7M10 8V1h10v7" /></svg></ViewBtn>
              <ViewBtn $w={22}><svg width="12" height="8" viewBox="0 0 12 8"><path d="M0 6.500h12" stroke="#8b898c" strokeWidth="2.500" /></svg></ViewBtn>
              <ViewBtn $w={145}><svg width="6" height="8" viewBox="0 0 6 8"><path d="M0 0h6v8H0z" fill="#6b696c" /></svg></ViewBtn>
              <ViewBtn $w={19}><svg width="12" height="8" viewBox="0 0 12 8"><path d="M0 7h12M6 1v7" stroke="#77757a" strokeWidth="2.400" /></svg></ViewBtn>
              <Gap $w={14} /><Zoom>110%</Zoom>
            </Status>
          </Window>
        </Stage>
        <Footer><PageNo>14</PageNo><Company>Insert your Company &amp; Project names</Company></Footer>
      </Slide>
    </>
  );
}
